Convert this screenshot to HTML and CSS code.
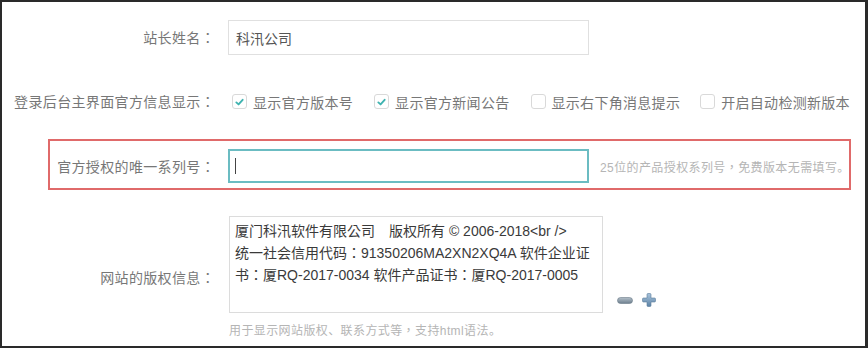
FILE: index.html
```html
<!DOCTYPE html>
<html lang="zh-CN">
<head>
<meta charset="utf-8">
<title>系统设置</title>
<link rel="stylesheet" href="styles.css">
</head>
<body>
<div class="frame">
  <div class="row row-name">
    <div class="label">站长姓名<span class="colon" lang="zh-TW">：</span></div>
    <div class="field"><input class="text-input" type="text" value="科汛公司"></div>
  </div>

  <div class="row row-checks">
    <div class="label label-wide">登录后台主界面官方信息显示<span class="colon" lang="zh-TW">：</span></div>
    <div class="field checks">
      <label class="check"><span class="box on"><svg viewBox="0 0 14 14" width="14" height="14"><path d="M3.6 7.4 L6 9.6 L10.4 4.6" fill="none" stroke="#3fb3b0" stroke-width="2" stroke-linecap="round" stroke-linejoin="round"/></svg></span>显示官方版本号</label>
      <label class="check"><span class="box on"><svg viewBox="0 0 14 14" width="14" height="14"><path d="M3.6 7.4 L6 9.6 L10.4 4.6" fill="none" stroke="#3fb3b0" stroke-width="2" stroke-linecap="round" stroke-linejoin="round"/></svg></span>显示官方新闻公告</label>
      <label class="check"><span class="box"></span>显示右下角消息提示</label>
      <label class="check"><span class="box"></span>开启自动检测新版本</label>
    </div>
  </div>

  <div class="row row-serial">
    <div class="label">官方授权的唯一系列号<span class="colon" lang="zh-TW">：</span></div>
    <div class="field serial-field">
      <div class="serial-wrap"><input class="text-input serial-input" type="text" value=""><span class="caret"></span></div>
      <span class="hint hint-inline">25位的产品授权系列号<span class="colon" lang="zh-TW">，</span>免费版本无需填写。</span>
    </div>
  </div>

  <div class="row row-copy">
    <div class="label">网站的版权信息<span class="colon" lang="zh-TW">：</span></div>
    <div class="field copy-field">
      <div class="copy-line">
        <textarea class="copy-area" lang="zh-TW">厦门科汛软件有限公司　版权所有 © 2006-2018&lt;br /&gt;
统一社会信用代码：91350206MA2XN2XQ4A 软件企业证
书：厦RQ-2017-0034 软件产品证书：厦RQ-2017-0005</textarea>
        <div class="resize-icons">
          <svg class="ico-minus" viewBox="0 0 16 7" width="16" height="7"><defs><linearGradient id="gm" x1="0" y1="0" x2="0" y2="1"><stop offset="0" stop-color="#b4c0ca"/><stop offset="1" stop-color="#6d7f8e"/></linearGradient></defs><rect x="0.5" y="0.5" width="15" height="6" rx="3" fill="url(#gm)" stroke="#6a7a88" stroke-width="0.6"/></svg>
          <svg class="ico-plus" viewBox="0 0 14 14" width="14" height="14"><defs><linearGradient id="gp" x1="0" y1="0" x2="0" y2="1"><stop offset="0" stop-color="#a9c4dc"/><stop offset="1" stop-color="#5d83a6"/></linearGradient></defs><path d="M5 1.5 Q5 0.5 6 0.5 H8 Q9 0.5 9 1.5 V5 H12.5 Q13.5 5 13.5 6 V8 Q13.5 9 12.5 9 H9 V12.5 Q9 13.5 8 13.5 H6 Q5 13.5 5 12.5 V9 H1.5 Q0.5 9 0.5 8 V6 Q0.5 5 1.5 5 H5 Z" fill="url(#gp)" stroke="#5a7c9c" stroke-width="0.6"/></svg>
        </div>
      </div>
      <div class="hint hint-below">用于显示网站版权、联系方式等<span class="colon" lang="zh-TW">，</span>支持html语法。</div>
    </div>
  </div>
</div>
</body>
</html>
```

FILE: styles.css
```css
* { box-sizing: border-box; }

html, body {
  margin: 0;
  padding: 0;
  background: #2a2a2a;
}

.frame {
  width: 868px;
  height: 348px;
  border-style: solid;
  border-color: #2a2a2a;
  border-width: 2px 3px 2px 2px;
  background: #ffffff;
  padding-top: 18px;
  font-family: "Liberation Sans", "Noto Sans CJK SC", sans-serif;
  font-size: 14px;
  color: #777;
  overflow: hidden;
}

.colon {
  font-family: "Noto Sans CJK TC", "Noto Sans CJK SC", sans-serif;
}

.row {
  display: flex;
  align-items: center;
}

.label {
  width: 226px;
  flex: 0 0 226px;
  text-align: right;
  padding-right: 13px;
  white-space: nowrap;
  color: #777;
  line-height: 20px;
  letter-spacing: 0.35px;
}

.field {
  display: flex;
  align-items: center;
}

.text-input {
  width: 361px;
  height: 35px;
  border: 1px solid #e0e0e0;
  padding: 0 7px;
  font-family: "Liberation Sans", "Noto Sans CJK SC", sans-serif;
  font-size: 14px;
  color: #555;
  outline: none;
  background: #fff;
  margin: 0;
}

.row-name {
  height: 35px;
}

.row-checks {
  height: 35px;
  margin-top: 29px;
}

.checks {
  padding-left: 4px;
}

.check {
  display: flex;
  align-items: center;
  margin-right: 21px;
  color: #777;
  white-space: nowrap;
  letter-spacing: 0.3px;
}

.check:nth-child(2) { margin-right: 21px; }
.check:nth-child(3) { margin-right: 20px; }
.check:last-child { margin-right: 0; }

.box {
  width: 15px;
  height: 15px;
  border: 1px solid #d9d9d9;
  border-radius: 3px;
  margin-right: 6px;
  display: flex;
  align-items: center;
  justify-content: center;
  background: #fff;
}

.box svg { display: block; }

.row-serial {
  margin-top: 20px;
  margin-left: 46px;
  width: 803px;
  height: 51px;
  border: 2px solid #e06a6a;
  padding: 6px 0 3px;
}

.row-serial .label {
  width: 178px;
  flex: 0 0 178px;
}

.serial-wrap {
  position: relative;
}

.serial-input {
  display: block;
  width: 361px;
  height: 34px;
  border: 2px solid #6bbcc2;
}

.caret {
  position: absolute;
  left: 7px;
  top: 9px;
  width: 1px;
  height: 16px;
  background: #444;
}

.hint {
  font-size: 12px;
  color: #b5b5b5;
  white-space: nowrap;
  letter-spacing: 0.4px;
}

.hint-inline {
  margin-left: 11px;
}

.row-copy {
  margin-top: 26px;
}

.copy-field {
  flex-direction: column;
  align-items: flex-start;
  padding-left: 1px;
}

.copy-line {
  display: flex;
  align-items: flex-end;
}

.copy-area {
  display: block;
  width: 374px;
  height: 97px;
  margin: 0;
  border: 1px solid #dcdcdc;
  padding: 3px 5px;
  font-family: "Liberation Sans", "Noto Sans CJK TC", sans-serif;
  font-size: 14px;
  line-height: 22px;
  color: #3a3a3a;
  resize: none;
  overflow: hidden;
  white-space: pre;
  outline: none;
}

.resize-icons {
  display: flex;
  align-items: center;
  margin-left: 14px;
  margin-bottom: 6px;
}

.resize-icons svg { display: block; }

.ico-plus { margin-left: 9px; }

.hint-below {
  margin-top: 10px;
  line-height: 14px;
}
```
